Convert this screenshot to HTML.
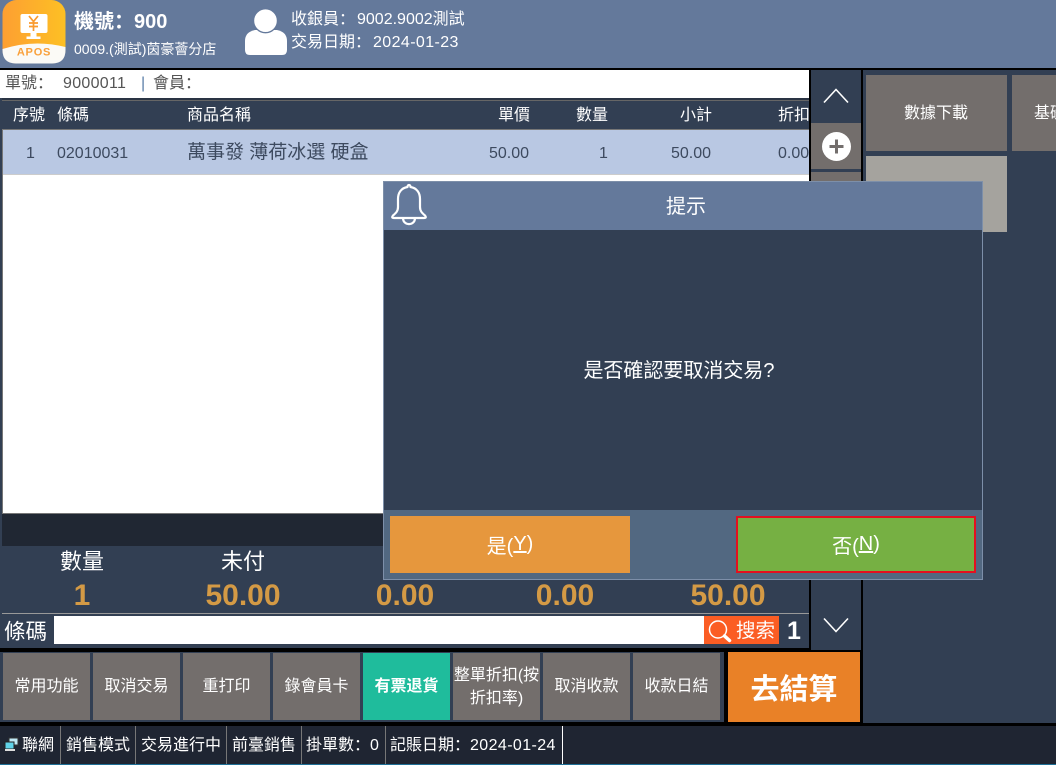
<!DOCTYPE html>
<html lang="zh-Hans"><head><meta charset="utf-8">
<style>
html,body{margin:0;padding:0;width:1056px;height:765px;overflow:hidden;background:#000}
body{position:relative;font-family:"Liberation Sans","Noto Sans CJK SC","Noto Sans CJK TC",sans-serif;color:#fff}
.b{position:absolute}
.t{position:absolute;white-space:nowrap;line-height:20px;height:20px}
.c{text-align:center;transform:translateX(-50%)}
.btn{position:absolute;top:653px;width:87px;height:67px;background:#736e6c;display:flex;align-items:center;justify-content:center;text-align:center;font-size:16px;line-height:23px}
.h{font-size:16px;color:#fff}
.d{font-size:16px;color:#3d4a5f}
.s{font-size:22px}
.n{font-size:30px;font-weight:bold;color:#d49a45;line-height:32px;height:32px}
.st{font-size:16px;top:736px}
.sep{position:absolute;top:726px;width:1px;height:38px;background:#777}
</style></head><body>

<!-- header -->
<div class="b" style="left:0;top:0;width:1056px;height:68px;background:#64799b"></div>
<svg class="b" style="left:2px;top:0" width="64" height="64" viewBox="0 0 64 64">
<defs><linearGradient id="g" x1="0" x2="1" y1="0" y2="0"><stop offset="0" stop-color="#fd9f32"/><stop offset="1" stop-color="#fdc024"/></linearGradient></defs>
<rect x="0.5" y="0" width="63" height="63.5" rx="14" fill="url(#g)"/>
<path d="M0.500 49Q32 39 63.500 47V50Q63.500 63.500 50 63.500H14Q0.500 63.500 0.500 50Z" fill="#fbfaf6"/>
<rect x="18.500" y="14" width="27" height="19" rx="2" fill="#fff"/>
<path d="M27 16L31.500 21.500L36 16M31.500 21.500V31M27 23H36M27 26.500H36" stroke="#f99a2e" stroke-width="1.700" fill="none"/>
<path d="M28.500 33H34.500V36.500H38.500V39H24.500V36.500H28.500Z" fill="#fff"/>
<text x="32" y="55.500" text-anchor="middle" font-family="Liberation Sans" font-weight="bold" font-size="11" letter-spacing=".8" fill="#f9a03a">APOS</text>
</svg>
<div class="t" style="left:74px;top:12px;font-size:20px;font-weight:bold">機號：900</div>
<div class="t" style="left:74px;top:39px;font-size:14px">0009.(測試)茵豪薈分店</div>
<svg class="b" style="left:244px;top:8px" width="44" height="48" viewBox="0 0 44 48">
<path d="M1 42V33Q1 24 11 22H33Q43 24 43 33V42Q43 47 38 47H6Q1 47 1 42Z" fill="#fff"/>
<circle cx="21.500" cy="12.700" r="12" fill="#fff" stroke="#64799b" stroke-width="1.400"/>
</svg>
<div class="t" style="left:291px;top:10px;font-size:16px">收銀員：</div>
<div class="t" style="left:357px;top:10px;font-size:16px">9002.9002測試</div>
<div class="t" style="left:291px;top:33px;font-size:16px">交易日期：</div>
<div class="t" style="left:373px;top:33px;font-size:16px;letter-spacing:.4px">2024-01-23</div>

<!-- info bar -->
<div class="b" style="left:0;top:70px;width:809px;height:578px;background:#323f53"></div>
<div class="b" style="left:0;top:70px;width:809px;height:28px;background:#fff"></div>
<div class="t" style="left:5px;top:74px;font-size:16px;color:#555">單號：</div>
<div class="t" style="left:63px;top:74px;font-size:16px;color:#555;letter-spacing:.3px">9000011</div>
<div class="t" style="left:141px;top:74px;font-size:16px;color:#5a7ea8">|</div>
<div class="t" style="left:153px;top:74px;font-size:16px;color:#555">會員：</div>

<!-- table -->
<div class="b" style="left:2px;top:98px;width:807px;height:2px;background:#2a3444"></div>
<div class="b" style="left:2px;top:100px;width:807px;height:30px;background:#323f53;border-top:1px solid #666;border-bottom:1px solid #777;box-sizing:border-box"></div>
<div class="t h" style="left:13px;top:106px">序號</div>
<div class="t h" style="left:57px;top:106px">條碼</div>
<div class="t h" style="left:187px;top:106px">商品名稱</div>
<div class="t h" style="left:498px;top:106px">單價</div>
<div class="t h" style="left:576px;top:106px">數量</div>
<div class="t h" style="left:680px;top:106px">小計</div>
<div class="t h" style="left:778px;top:106px">折扣</div>
<div class="b" style="left:2px;top:130px;width:1px;height:384px;background:#777"></div>
<div class="b" style="left:3px;top:130px;width:806px;height:44px;background:#b9c8e3"></div>
<div class="b" style="left:3px;top:174px;width:806px;height:1px;background:#ccc"></div>
<div class="b" style="left:3px;top:175px;width:806px;height:338px;background:#fff"></div>
<div class="b" style="left:2px;top:513px;width:807px;height:1px;background:#777"></div>
<div class="t d" style="left:26px;top:144px">1</div>
<div class="t d" style="left:57px;top:144px">02010031</div>
<div class="t" style="left:187px;top:143px;font-size:19px;color:#3d4a5f">萬事發 薄荷冰選 硬盒</div>
<div class="t d" style="left:489px;top:144px">50.00</div>
<div class="t d" style="left:599px;top:144px">1</div>
<div class="t d" style="left:671px;top:144px">50.00</div>
<div class="t d" style="left:778px;top:144px">0.00</div>

<!-- footer of table -->
<div class="b" style="left:2px;top:514px;width:807px;height:32px;background:#202733"></div>
<div class="t s c" style="left:82px;top:552px">數量</div>
<div class="t s c" style="left:243px;top:552px">未付</div>
<div class="t n c" style="left:82px;top:580px">1</div>
<div class="t n c" style="left:243px;top:580px">50.00</div>
<div class="t n c" style="left:405px;top:580px">0.00</div>
<div class="t n c" style="left:565px;top:580px">0.00</div>
<div class="t n c" style="left:728px;top:580px">50.00</div>
<div class="b" style="left:2px;top:613px;width:807px;height:1px;background:#999"></div>
<div class="t" style="left:4px;top:622px;font-size:21.500px">條碼</div>
<div class="b" style="left:54px;top:616px;width:650px;height:28px;background:#fff"></div>
<div class="b" style="left:704px;top:616px;width:75px;height:28px;background:#fb5d24"></div>
<svg class="b" style="left:708px;top:619px" width="25" height="25" viewBox="0 0 25 25">
<circle cx="10" cy="10.500" r="8.500" fill="none" stroke="#fff" stroke-width="1.500"/>
<path d="M16.500 17L21.500 21.500" stroke="#fff" stroke-width="3.500" stroke-linecap="round"/>
</svg>
<div class="t" style="left:736px;top:621px;font-size:19.500px">搜索</div>
<div class="t" style="left:787px;top:621px;font-size:25px;font-weight:bold">1</div>

<!-- bottom buttons -->
<div class="b" style="left:0;top:652px;width:724px;height:70px;background:#323f53"></div>
<div class="btn" style="left:3px">常用功能</div>
<div class="btn" style="left:93px">取消交易</div>
<div class="btn" style="left:183px">重打印</div>
<div class="btn" style="left:273px">錄會員卡</div>
<div class="btn" style="left:363px;background:#1fbc9c;font-weight:bold">有票退貨</div>
<div class="btn" style="left:453px">整單折扣(按<br>折扣率)</div>
<div class="btn" style="left:543px">取消收款</div>
<div class="btn" style="left:633px">收款日結</div>
<div class="b" style="left:728px;top:652px;width:132px;height:70px;background:#e98127;display:flex;align-items:center;justify-content:center;font-size:29px;font-weight:bold">去結算</div>

<!-- scroll column -->
<div class="b" style="left:811px;top:70px;width:50px;height:53px;background:#323f53"></div>
<svg class="b" style="left:823px;top:87px" width="26" height="17" viewBox="0 0 26 17"><path d="M1 15.500L13 2.500L25 15.500" fill="none" stroke="#fff" stroke-width="1.600"/></svg>
<div class="b" style="left:811px;top:123px;width:50px;height:46px;background:#736e6c"></div>
<svg class="b" style="left:822px;top:132px" width="29" height="29" viewBox="0 0 29 29"><circle cx="14.500" cy="14.500" r="14.500" fill="#fff"/><path d="M14.500 7.500V21.500M7.500 14.500H21.500" stroke="#736e6c" stroke-width="3"/></svg>
<div class="b" style="left:811px;top:169px;width:50px;height:3px;background:#323f53"></div>
<div class="b" style="left:811px;top:172px;width:50px;height:20px;background:#736e6c"></div>
<div class="b" style="left:811px;top:580px;width:50px;height:70px;background:#323f53"></div>
<svg class="b" style="left:823px;top:617px" width="26" height="17" viewBox="0 0 26 17"><path d="M1 1.500L13 14.500L25 1.500" fill="none" stroke="#fff" stroke-width="1.600"/></svg>

<!-- right panel -->
<div class="b" style="left:863px;top:70px;width:193px;height:653px;background:#323f53"></div>
<div class="b" style="left:866px;top:75px;width:141px;height:76px;background:#736e6c"></div>
<div class="t c" style="left:936px;top:104px;font-size:16px">數據下載</div>
<div class="b" style="left:1012px;top:75px;width:44px;height:76px;background:#736e6c;overflow:hidden"></div>
<div class="t" style="left:1034px;top:104px;font-size:16px;width:22px;overflow:hidden">基礎</div>
<div class="b" style="left:866px;top:156px;width:141px;height:76px;background:#a5a39e"></div>

<!-- dialog -->
<div class="b" style="left:383px;top:181px;width:600px;height:399px;background:#323f53;box-shadow:inset 0 0 0 1px #7d8fa9"></div>
<div class="b" style="left:384px;top:181px;width:598px;height:49px;background:#64799b;border-top:1px solid #7d8fa9;box-sizing:border-box"></div>
<svg class="b" style="left:389px;top:183px" width="40" height="44" viewBox="0 0 40 44">
<path d="M20 2C19 2 18.500 3 18.500 4C12 5 9 10 9 16V24C9 28 7 30 4 32.500Q2 35 5 35H35Q38 35 36 32.500C33 30 31 28 31 24V16C31 10 28 5 21.500 4C21.500 3 21 2 20 2Z" fill="none" stroke="#fff" stroke-width="2.200" stroke-linejoin="round"/>
<path d="M14 35.500C14.500 43 25.500 43 26 35.500" fill="none" stroke="#fff" stroke-width="2.200"/>
</svg>
<div class="t c" style="left:686px;top:197px;font-size:20px">提示</div>
<div class="t c" style="left:679px;top:361px;font-size:20px">是否確認要取消交易?</div>
<div class="b" style="left:384px;top:510px;width:598px;height:69px;background:#526881"></div>
<div class="b" style="left:390px;top:516px;width:240px;height:57px;background:#e6973d;display:flex;align-items:center;justify-content:center;font-size:20px">是(<u>Y</u>)</div>
<div class="b" style="left:736px;top:516px;width:240px;height:57px;box-sizing:border-box;background:#76b043;border:2px solid #e5101f;display:flex;align-items:center;justify-content:center;font-size:20px">否(<u>N</u>)</div>

<!-- status bar -->
<div class="b" style="left:0;top:726px;width:1056px;height:39px;background:#1f2532"></div>
<div class="b" style="left:0;top:764px;width:1056px;height:1px;background:#1e6f96"></div>
<svg class="b" style="left:4px;top:737px" width="15" height="15" viewBox="0 0 15 15">
<rect x="5" y="1" width="9" height="7" fill="#bfe9f5" stroke="#333" stroke-width="1"/>
<rect x="1" y="5" width="9" height="7" fill="#5fd2e8" stroke="#222" stroke-width="1"/>
<rect x="1" y="12" width="10" height="2" fill="#ddd"/>
</svg>
<div class="t st" style="left:22px">聯網</div><div class="sep" style="left:60px"></div>
<div class="t st" style="left:66px">銷售模式</div><div class="sep" style="left:135px"></div>
<div class="t st" style="left:141px">交易進行中</div><div class="sep" style="left:226px"></div>
<div class="t st" style="left:232px">前臺銷售</div><div class="sep" style="left:301px"></div>
<div class="t st" style="left:306px">掛單數：</div><div class="t st" style="left:370px">0</div><div class="sep" style="left:385px"></div>
<div class="t st" style="left:390px">記賬日期：</div><div class="t st" style="left:470px;letter-spacing:.4px">2024-01-24</div>
<div class="sep" style="left:562px;background:#fff"></div>
</body></html>
